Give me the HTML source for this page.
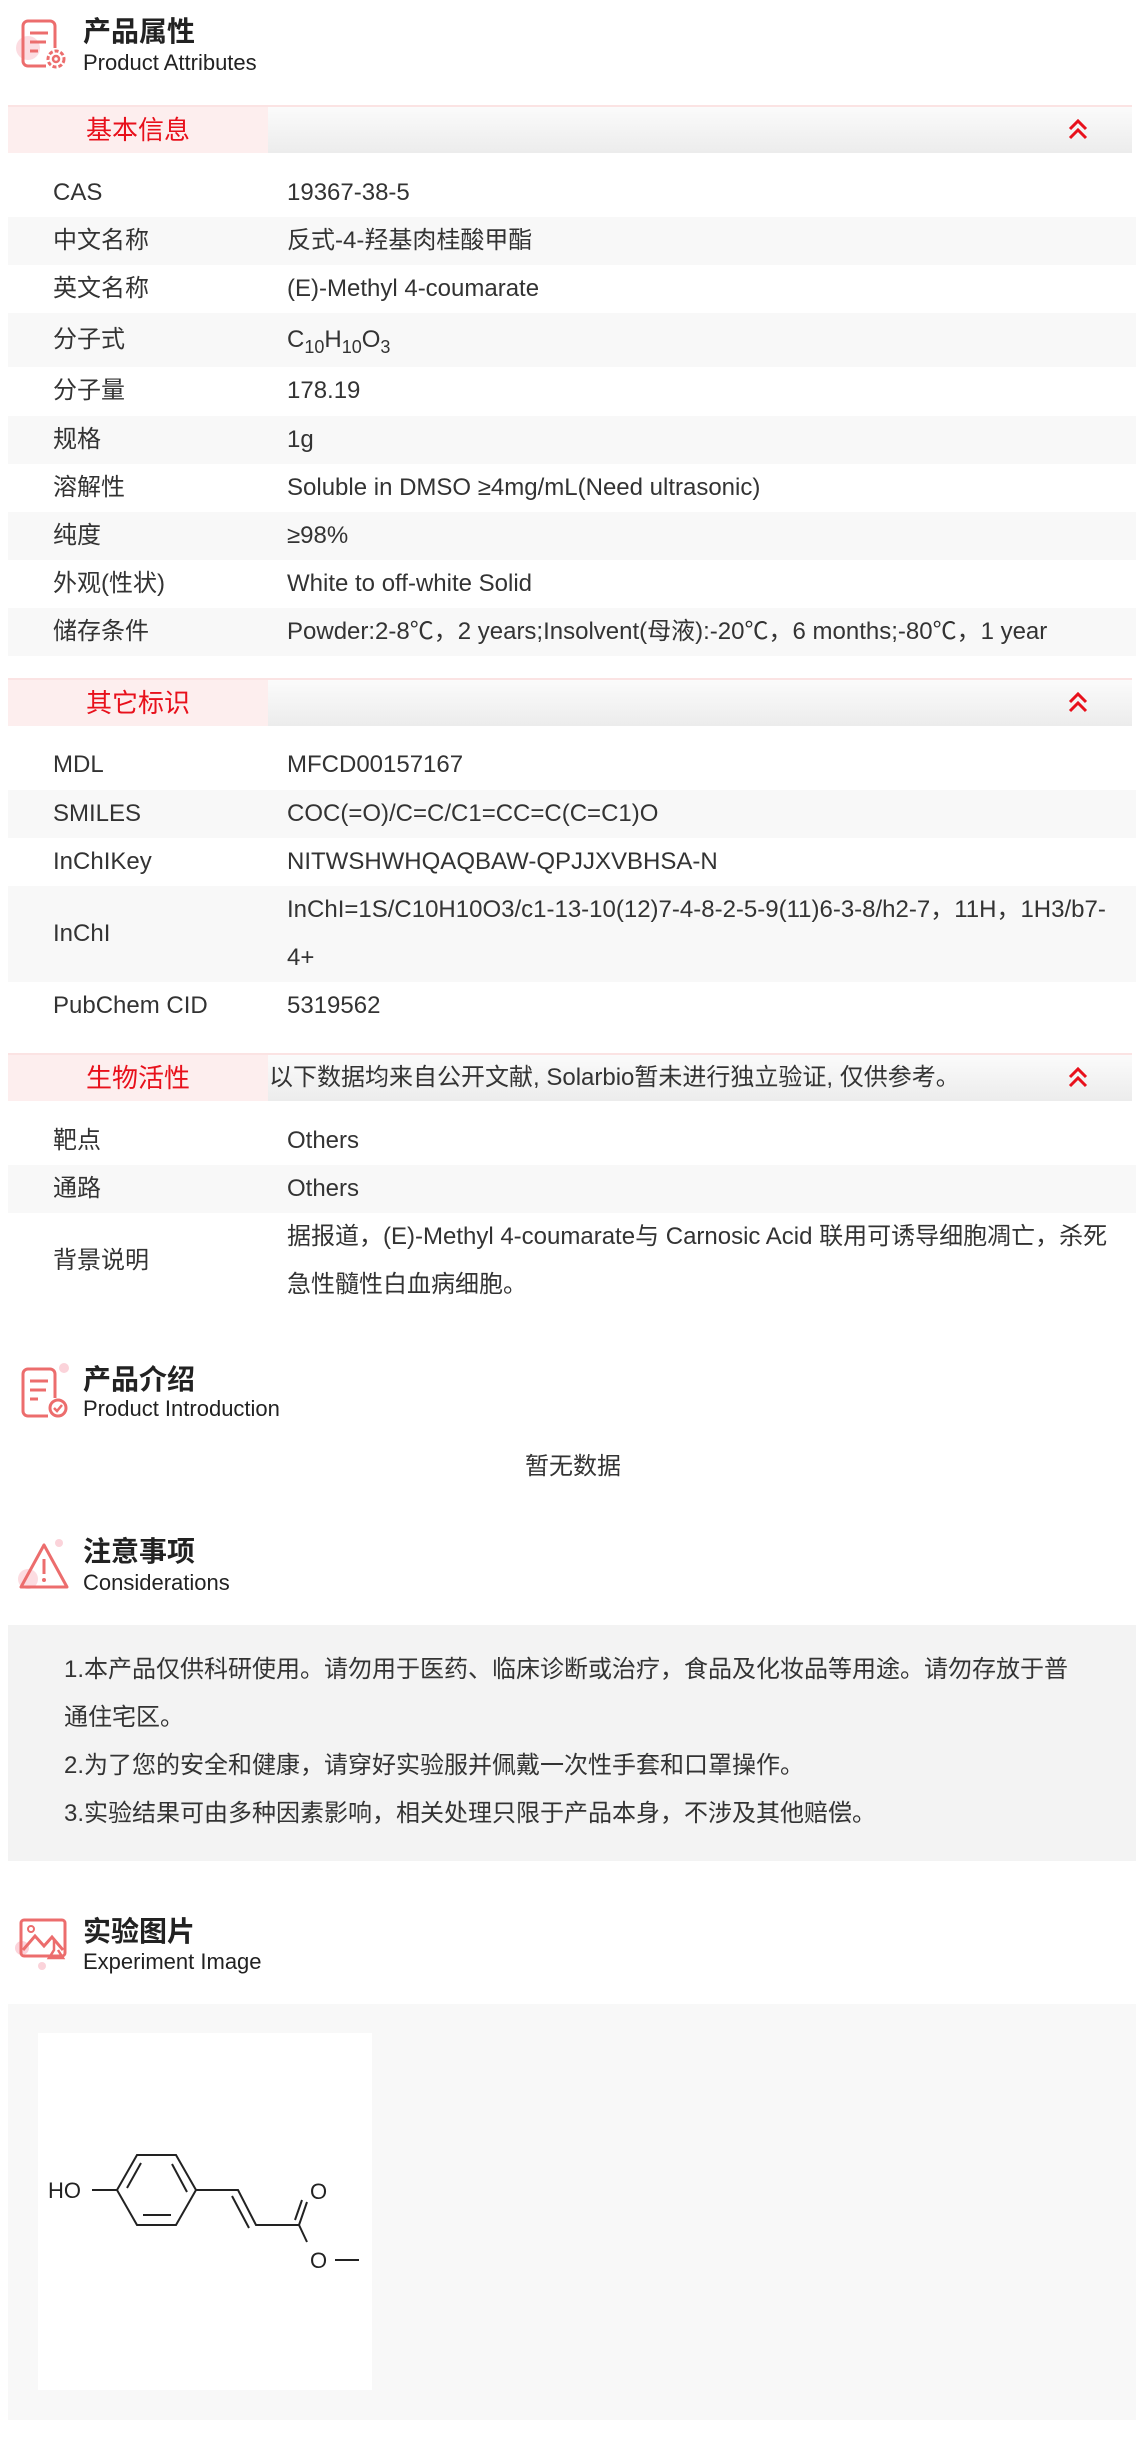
<!DOCTYPE html>
<html><head><meta charset="utf-8"><style>
*{margin:0;padding:0;box-sizing:border-box}
body{width:1142px;height:2455px;background:#fff;position:relative;font-family:"Liberation Sans","Noto Sans CJK SC",sans-serif;color:#333;overflow:hidden}
.a{position:absolute}
.h1{position:absolute;left:83px;font-size:28px;font-weight:bold;color:#222;line-height:30px}
.h2{position:absolute;left:83px;font-size:22px;color:#222;line-height:24px}
.band{position:absolute;left:8px;width:1124px;height:48px;border-top:2px solid #fbe3e3;background:linear-gradient(#fbfbfb,#ececec)}
.band .p{position:absolute;left:0;top:0;width:260px;height:46px;background:#fdeeee;color:#e8101b;font-size:26px;text-align:center;line-height:46px}
.band svg{position:absolute;left:1060px;top:12px}
.band .n{position:absolute;left:261px;top:0;line-height:46px;font-size:24px;color:#333}
.row{position:absolute;left:8px;width:1128px;height:48px;font-size:24px;line-height:48px}
.row.g{background:#f8f8f8}
.row .l{position:absolute;left:45px}
.row .v{position:absolute;left:279px}
</style></head><body>

<svg class="a" style="left:16px;top:14px" width="56" height="60" viewBox="0 0 56 60">
<circle cx="12" cy="34" r="12" fill="#fbd3da" opacity=".8"/>
<path d="M30 52H12a5 5 0 0 1-5-5V12a5 5 0 0 1 5-5h22a5 5 0 0 1 5 5v22" fill="none" stroke="#ec6d6d" stroke-width="3"/>
<path d="M14 19h18M14 28h16M14 37h8" stroke="#ec6d6d" stroke-width="3"/>
<circle cx="40" cy="45" r="8" fill="none" stroke="#ec6d6d" stroke-width="3" stroke-dasharray="4 2"/>
<circle cx="40" cy="45" r="3" fill="none" stroke="#ec6d6d" stroke-width="2.5"/>
</svg>
<div class="h1" style="top:17px">产品属性</div>
<div class="h2" style="top:51px">Product Attributes</div>

<div class="band" style="top:105px"><div class="p">基本信息</div>
<svg width="20" height="22" viewBox="0 0 20 22"><path d="M2 10l8-8 8 8M2 19l8-8 8 8" fill="none" stroke="#e8101b" stroke-width="3"/></svg></div>

<div class="row" style="top:169px"><span class="l">CAS</span><span class="v">19367-38-5</span></div>
<div class="row g" style="top:217px"><span class="l">中文名称</span><span class="v">反式-4-羟基肉桂酸甲酯</span></div>
<div class="row" style="top:265px"><span class="l">英文名称</span><span class="v">(E)-Methyl 4-coumarate</span></div>
<div class="row g" style="top:313px;height:54px;line-height:54px"><span class="l">分子式</span><span class="v">C<sub style="font-size:18px">10</sub>H<sub style="font-size:18px">10</sub>O<sub style="font-size:18px">3</sub></span></div>
<div class="row" style="top:367px"><span class="l">分子量</span><span class="v">178.19</span></div>
<div class="row g" style="top:416px"><span class="l">规格</span><span class="v">1g</span></div>
<div class="row" style="top:464px"><span class="l">溶解性</span><span class="v">Soluble in DMSO ≥4mg/mL(Need ultrasonic)</span></div>
<div class="row g" style="top:512px"><span class="l">纯度</span><span class="v">≥98%</span></div>
<div class="row" style="top:560px"><span class="l">外观(性状)</span><span class="v">White to off-white Solid</span></div>
<div class="row g" style="top:608px"><span class="l">储存条件</span><span class="v">Powder:2-8℃，2 years;Insolvent(母液):-20℃，6 months;-80℃，1 year</span></div>

<div class="band" style="top:678px"><div class="p">其它标识</div>
<svg width="20" height="22" viewBox="0 0 20 22"><path d="M2 10l8-8 8 8M2 19l8-8 8 8" fill="none" stroke="#e8101b" stroke-width="3"/></svg></div>

<div class="row" style="top:741px"><span class="l">MDL</span><span class="v">MFCD00157167</span></div>
<div class="row g" style="top:790px"><span class="l">SMILES</span><span class="v">COC(=O)/C=C/C1=CC=C(C=C1)O</span></div>
<div class="row" style="top:838px"><span class="l">InChIKey</span><span class="v">NITWSHWHQAQBAW-QPJJXVBHSA-N</span></div>
<div class="row g" style="top:886px;height:96px"><span class="l" style="top:24px">InChI</span><span class="v">InChI=1S/C10H10O3/c1-13-10(12)7-4-8-2-5-9(11)6-3-8/h2-7，11H，1H3/b7-<br>4+</span></div>
<div class="row" style="top:982px"><span class="l">PubChem CID</span><span class="v">5319562</span></div>

<div class="band" style="top:1053px"><div class="p">生物活性</div><div class="n">以下数据均来自公开文献, Solarbio暂未进行独立验证, 仅供参考。</div>
<svg width="20" height="22" viewBox="0 0 20 22"><path d="M2 10l8-8 8 8M2 19l8-8 8 8" fill="none" stroke="#e8101b" stroke-width="3"/></svg></div>

<div class="row" style="top:1117px"><span class="l">靶点</span><span class="v">Others</span></div>
<div class="row g" style="top:1165px"><span class="l">通路</span><span class="v">Others</span></div>
<div class="row" style="top:1213px;height:96px"><span class="l" style="top:24px">背景说明</span><span class="v">据报道，(E)-Methyl 4-coumarate与 Carnosic Acid 联用可诱导细胞凋亡，杀死<br>急性髓性白血病细胞。</span></div>

<svg class="a" style="left:16px;top:1362px" width="56" height="60" viewBox="0 0 56 60">
<circle cx="48" cy="6" r="5" fill="#fbd3da"/>
<path d="M32 54H12a5 5 0 0 1-5-5V12a5 5 0 0 1 5-5h22a5 5 0 0 1 5 5v24" fill="none" stroke="#ec6d6d" stroke-width="3"/>
<path d="M14 19h18M14 28h16M14 37h8" stroke="#ec6d6d" stroke-width="3"/>
<circle cx="42" cy="46" r="8" fill="none" stroke="#ec6d6d" stroke-width="3"/>
<path d="M38 46l3 3 5-6" fill="none" stroke="#ec6d6d" stroke-width="2.5"/>
</svg>
<div class="h1" style="top:1365px">产品介绍</div>
<div class="h2" style="top:1397px">Product Introduction</div>
<div class="a" style="left:0;width:1146px;top:1452px;text-align:center;font-size:24px;line-height:30px">暂无数据</div>

<svg class="a" style="left:16px;top:1535px" width="56" height="60" viewBox="0 0 56 60">
<circle cx="43" cy="8" r="4" fill="#fbd3da"/>
<circle cx="12" cy="44" r="10" fill="#fbd3da" opacity=".8"/>
<path d="M28 10L5 52h46z" fill="none" stroke="#ec6d6d" stroke-width="3" stroke-linejoin="round"/>
<path d="M28 24v15" stroke="#ec6d6d" stroke-width="3"/><circle cx="28" cy="45" r="2" fill="#ec6d6d"/>
</svg>
<div class="h1" style="top:1537px">注意事项</div>
<div class="h2" style="top:1571px">Considerations</div>

<div class="a" style="left:8px;top:1625px;width:1128px;height:236px;background:#f3f3f3"></div>
<div class="a" style="left:64px;top:1646px;width:1012px;font-size:24px;line-height:48px">1.本产品仅供科研使用。请勿用于医药、临床诊断或治疗，食品及化妆品等用途。请勿存放于普通住宅区。<br>2.为了您的安全和健康，请穿好实验服并佩戴一次性手套和口罩操作。<br>3.实验结果可由多种因素影响，相关处理只限于产品本身，不涉及其他赔偿。</div>

<svg class="a" style="left:14px;top:1910px" width="58" height="60" viewBox="0 0 58 60">
<circle cx="8" cy="38" r="7" fill="#fbd3da"/><circle cx="28" cy="56" r="4" fill="#fbd3da"/>
<rect x="7" y="10" width="44" height="36" rx="3" fill="none" stroke="#ec6d6d" stroke-width="3"/>
<path d="M9 40l12-14 9 10 8-9 11 13" fill="none" stroke="#ec6d6d" stroke-width="3"/>
<circle cx="17" cy="19" r="3" fill="none" stroke="#ec6d6d" stroke-width="2"/>
<path d="M40 30v10l-5 8h14l-5-8" fill="none" stroke="#ec6d6d" stroke-width="2.5"/>
</svg>
<div class="h1" style="top:1917px">实验图片</div>
<div class="h2" style="top:1950px">Experiment Image</div>

<div class="a" style="left:8px;top:2004px;width:1128px;height:416px;background:#f8f8f8"></div>
<div class="a" style="left:38px;top:2033px;width:334px;height:357px;background:#fff"></div>
<svg class="a" style="left:0;top:0" width="1142" height="2455" viewBox="0 0 1142 2455">
<g fill="none" stroke="#222" stroke-width="2">
<path d="M137 2155H176L196 2190L176 2225H137L117 2190Z"/>
<path d="M172 2164L187 2192"/><path d="M143 2215H171"/><path d="M127 2188L141 2163"/>
<path d="M92 2190H117"/>
<path d="M196 2190H238L256 2225H299L307 2242"/>
<path d="M232 2196L249 2228"/>
<path d="M299 2225L307 2202M295 2220L302 2200"/>
<path d="M335 2260H359"/>
</g>
<g font-family="Liberation Sans,sans-serif" font-size="22" fill="#222">
<text x="48" y="2198">HO</text>
<text x="310" y="2199">O</text>
<text x="310" y="2268">O</text>
</g>
</svg>
</body></html>
